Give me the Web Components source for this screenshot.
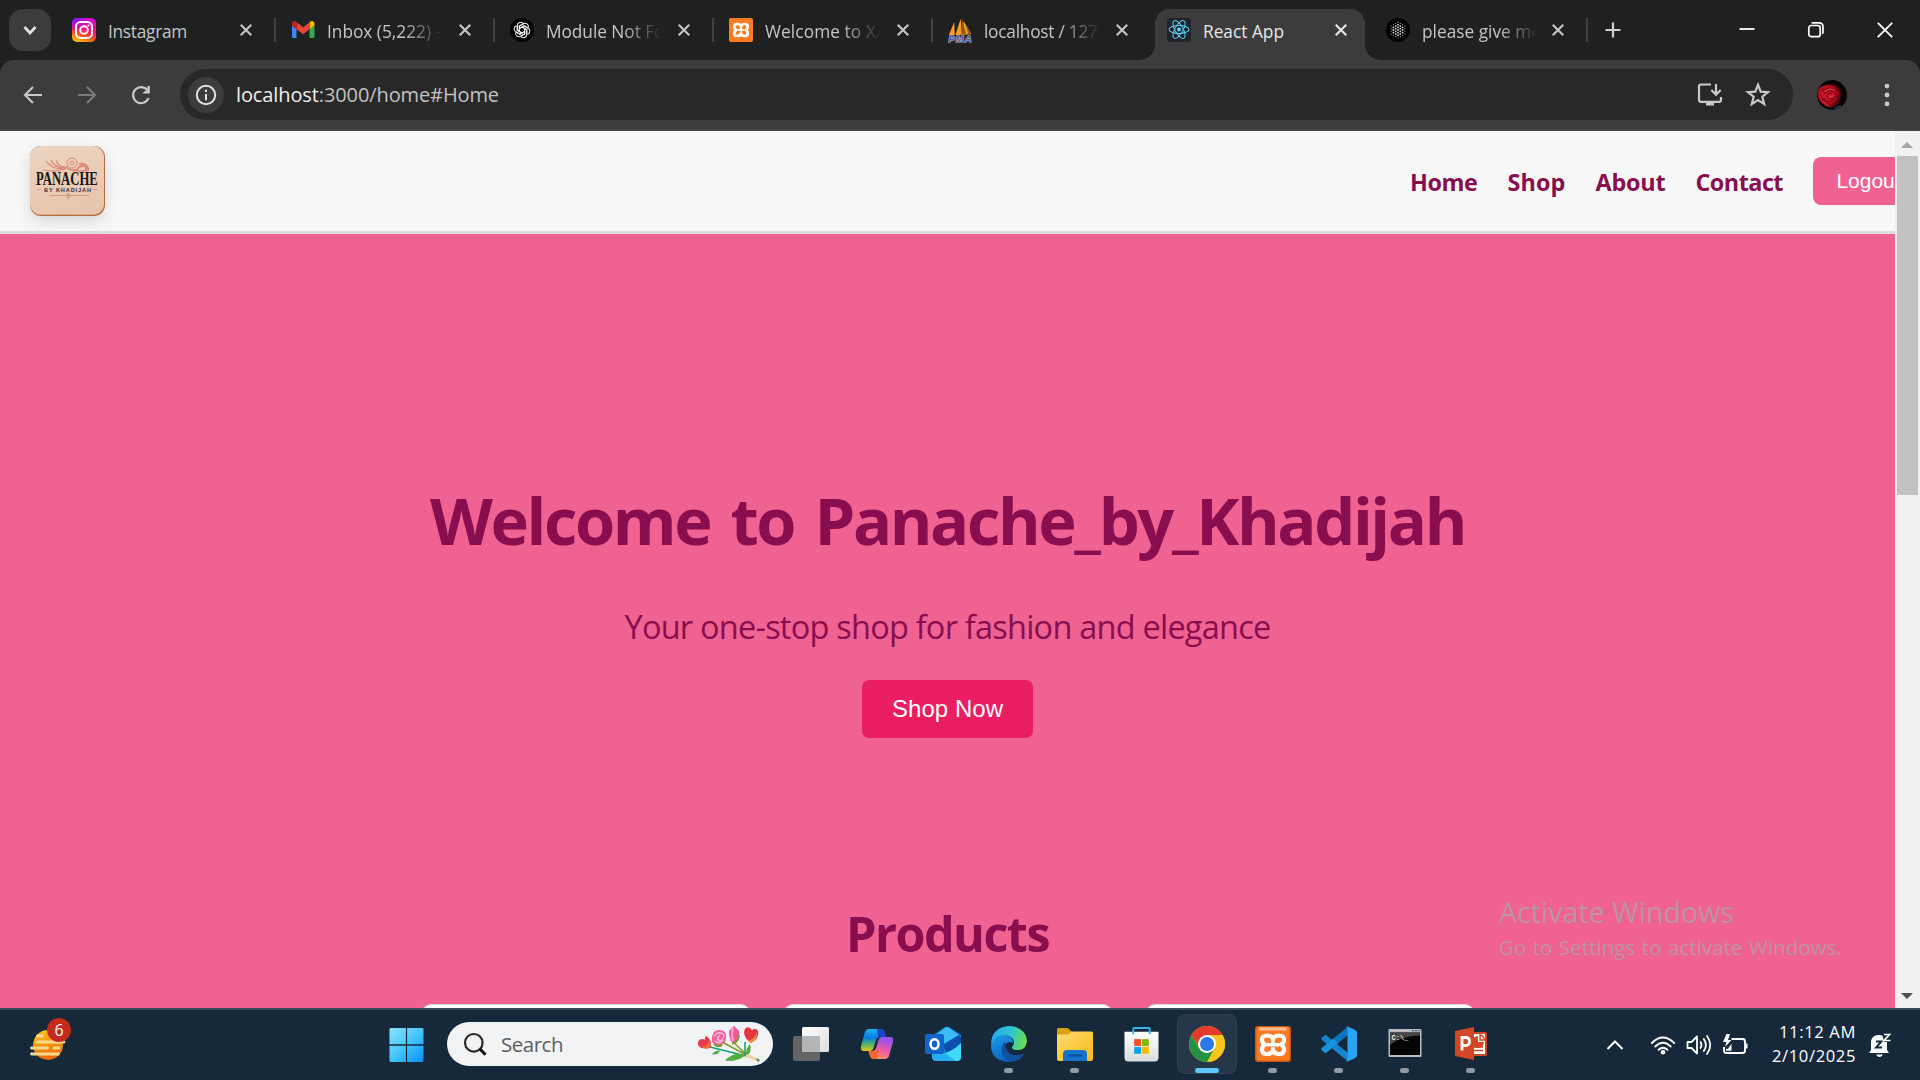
<!DOCTYPE html>
<html lang="en"><head><meta charset="utf-8"><title>React App</title>
<style>
html,body{margin:0;padding:0}
body{width:1920px;height:1080px;overflow:hidden;font-family:"Open Sans","Noto Sans",sans-serif}
</style></head><body>
<desk-screen></desk-screen>
<script>
const ICONS = {
down:['0 0 24 24','<path d="M6.500 9l5.500 6 5.500-6" fill="none" stroke="#e3e3e3" stroke-width="2.600"/>'],
close:['0 0 24 24','<path d="M5 5l14 14M19 5L5 19" stroke="currentColor" stroke-width="2.900"/>'],
instagram:['0 0 24 24','<defs><linearGradient id="a" x1=".2" y1="1" x2=".6" y2="0"><stop offset="0" stop-color="#ffc800"/><stop offset=".3" stop-color="#ff5a1c"/><stop offset=".6" stop-color="#ff0f7b"/><stop offset="1" stop-color="#d30bd0"/></linearGradient><radialGradient id="b" cx=".1" cy="0" r=".7"><stop offset="0" stop-color="#6a1bff"/><stop offset="1" stop-color="#c500e8" stop-opacity="0"/></radialGradient></defs><rect width="24" height="24" rx="5" fill="url(#a)"/><rect width="24" height="24" rx="5" fill="url(#b)"/><g fill="none" stroke="#fff" stroke-width="1.900"><rect x="4" y="4" width="16" height="16" rx="4.500"/><circle cx="12" cy="12" r="3.800"/></g><circle cx="16.500" cy="7.500" r="1.100" fill="#fff"/>'],
gmail:['0 0 24 24','<path fill="#4285f4" d="M1 20h4.500v-9L1 7.600V18.500q0 1.500 1.500 1.500z"/><path fill="#34a853" d="M18.500 20h3.500q1.500 0 1.500-1.500V7.600l-5 3.400z"/><path fill="#fbbc04" d="M18.500 5v6.200l5-3.800V5.700c0-2.200-2.500-3.400-4.200-2.100z"/><path fill="#ea4335" d="M5.500 11.200V4.300l6.700 5 6.300-5v6.900l-6.300 5z"/><path fill="#c5221f" d="M1 5.700v1.900l4.500 3.600V4.300l-.7-.6C3.200 2.300 1 3.500 1 5.700z"/>'],
chatgpt:['0 0 24 24','<circle cx="12" cy="12" r="12" fill="#000"/><g fill="none" stroke="#eee" stroke-width="1.100">'+[0,60,120,180,240,300].map(r=>`<path transform="rotate(${r} 12 12)" d="M9.300 13.500V8.100l4.300-2.500c2.700-1.300 5.500 1.200 4.700 3.900M12 9l4.700 2.700v4.300"/>`).join('')+'</g>'],
xampp:['0 0 24 24','<rect width="24" height="24" rx="2" fill="#fb7a24"/><path d="M12 8.500q-.6-2.500-3.800-2.500-3 0-3 2.800 0 2 2 3.200-2 1.200-2 3.200 0 2.800 3 2.800 3.200 0 3.800-2.500.6 2.500 3.800 2.500 3 0 3-2.800 0-2-2-3.200 2-1.200 2-3.200 0-2.800-3-2.800-3.200 0-3.800 2.500z" fill="none" stroke="#fff" stroke-width="2.700" stroke-linejoin="round"/><path d="M8.500 12h7M12 8v3.500M12 15.500v-2" stroke="#fff" stroke-width="2.200"/>'],
pma:['0 0 24 24','<path d="M.8 17L6.300 4l.4 13zM7.500 17L12.700.5 14 17zM14.500 17l1-14 7.800 13z" fill="#f89c1c"/><path d="M14 .5l4 15-4.500 2zM18 7l5.300 9.500h-3z" fill="#8d5c1e"/><text x="12" y="23.500" text-anchor="middle" font-family="Liberation Sans" font-weight="700" font-style="italic" font-size="9.500" textLength="23" fill="#55568f" stroke="#c5c6ee" stroke-width="1" paint-order="stroke">PMA</text>'],
react:['0 0 24 24','<rect width="24" height="24" rx="3" fill="#20232a"/><g fill="none" stroke="#5bcdec" stroke-width="1.050"><ellipse cx="12" cy="11.500" rx="10" ry="4"/><ellipse cx="12" cy="11.500" rx="10" ry="4" transform="rotate(60 12 11.500)"/><ellipse cx="12" cy="11.500" rx="10" ry="4" transform="rotate(120 12 11.500)"/></g><circle cx="12" cy="11.500" r="2" fill="#5bdafb"/>'],
dots:['0 0 24 24','<circle cx="12" cy="12" r="12" fill="#000"/><g fill="#d5d5d5">'+(()=>{let s='';for(let i=-3;i<=3;i++){const n=7-Math.abs(i);for(let j=0;j<n;j++){const y=12+(j-(n-1)/2)*2.6,x=12+i*2.3,e=(Math.abs(i)==3||j==0||j==n-1);s+=`<circle cx="${x}" cy="${y}" r="${e?.5:.9}"/>`}}return s})()+'</g>'],
plus:['0 0 24 24','<path d="M12 4.500v15M4.500 12h15" stroke="#d0d0d0" stroke-width="2.200"/>'],
min:['0 0 24 24','<path d="M4.500 11h15" stroke="#fff" stroke-width="1.800"/>'],
restore:['0 0 24 24','<g fill="none" stroke="#fff" stroke-width="1.700"><rect x="4.800" y="7.500" width="11.400" height="11.200" rx="2.500"/><path d="M7.500 5.200Q8 4.800 9.500 4.800h5.500q4 0 4 4v5q0 1.500-.8 2"/></g>'],
wclose:['0 0 24 24','<path d="M4.800 4.800l14.400 14.400M19.200 4.800L4.800 19.200" stroke="#fff" stroke-width="1.800"/>'],
back:['0 0 24 24','<path d="M21 12H4.500M12 4l-8 8 8 8" fill="none" stroke="currentColor" stroke-width="2.100"/>'],
reload:['0 0 24 24','<path d="M19.500 15.200a8 8 0 1 1-.8-7.600" fill="none" stroke="#c9c9c9" stroke-width="2.200"/><path d="M20.800 3v7.500h-7.500l2.600-2.500h2.500V3z" fill="#c9c9c9"/>'],
info:['0 0 24 24','<circle cx="12" cy="12" r="9.200" fill="none" stroke="#e3e3e3" stroke-width="2"/><path d="M12 11v6.200M12 6.800v2.200" stroke="#e3e3e3" stroke-width="2"/>'],
install:['0 0 26 26','<path d="M14 2.500H4Q2 2.500 2 4.500v13.300q0 2 2 2h18q2 0 2-2V15" fill="none" stroke="#c9c9c9" stroke-width="2.200"/><path d="M9 20h8v3.500H9z" fill="#c9c9c9"/><path d="M19 2v10M14.300 8l4.700 4.600L23.700 8" fill="none" stroke="#c9c9c9" stroke-width="2.200"/>'],
star:['0 0 24 24','<path d="M12 3.200l2.300 5.900 6.300.4-4.900 4 1.600 6.300L12 16.400l-5.300 3.400 1.600-6.300-4.900-4 6.300-.4z" fill="none" stroke="#c9c9c9" stroke-width="1.900"/>'],
avatar:['0 0 30 30','<defs><radialGradient id="r" cx=".42" cy=".45" r=".55"><stop offset="0" stop-color="#e01c2e"/><stop offset=".7" stop-color="#b20c1b"/><stop offset="1" stop-color="#4a040b"/></radialGradient><clipPath id="c"><circle cx="15" cy="15" r="15"/></clipPath></defs><g clip-path="url(#c)"><rect width="30" height="30" fill="#080407"/><path d="M2 8Q8 3 18 5q7 3 6 11-1 9-9 12-8-1-13-8-3-6 0-12z" fill="url(#r)"/><g fill="none" stroke="#5c040d" stroke-width=".9"><path d="M5 11q8-6 16 0M7 14q7-6 12 0-1 5-6 5-4-1-3-4 2-3 5-1"/><path d="M4 15q2 8 9 10M23 14q-1 7-8 10M7 18q3 5 8 3 5-1 6-6"/></g><path d="M8 12q5-5 10-2M12 17q3 1 5-2M6 21q3 4 6 5" stroke="#ff5a63" stroke-width=".7" fill="none"/><path d="M17 29q2-4 7-4v5z" fill="#17314f"/></g>'],
menu:['0 0 24 24','<g fill="#c9c9c9"><circle cx="12" cy="3.800" r="2.200"/><circle cx="12" cy="12" r="2.200"/><circle cx="12" cy="20.200" r="2.200"/></g>'],
logo:['0 0 75 70','<defs><linearGradient id="l" x1="0" y1="0" x2=".3" y2="1"><stop offset="0" stop-color="#edd5c1"/><stop offset="1" stop-color="#e8c5ae"/></linearGradient></defs><rect width="75" height="70" rx="11" fill="#b9683c"/><rect width="74" height="68.700" rx="11" fill="url(#l)"/><g fill="none" stroke="#dc8877"><path d="M13 24q20 3 25-4M16 15q6 9 20 8M21 14q3 8 14 8M26 14q2 7 10 7" stroke-width="1.200"/><circle cx="42" cy="17" r="5"/><circle cx="42" cy="17" r="2"/><path d="M37 22q8 5 12-1 5-5 10 2M44 24q7 2 15 0M49 18q8-2 9 5M50 21q7-3 6 3" stroke-width="1.500"/></g><text transform="translate(6 39) scale(.705 1)" font-family="Liberation Serif" font-weight="700" font-size="18" fill="#151515">PANACHE</text><text x="14" y="46" font-family="Liberation Sans" font-weight="700" font-size="5.600" textLength="47" fill="#33303c">BY KHADIJAH</text><path d="M7 43.500h4M63 43.500h4M20 49.500h39M38.500 47v6M36.500 49.500l2-2 2 2-2 3z" stroke="#cf8f70" stroke-width=".8" fill="none"/>'],
widget:['0 0 38 42','<defs><linearGradient id="s" x1="0" y1="0" x2=".2" y2="1"><stop offset="0" stop-color="#ffc817"/><stop offset="1" stop-color="#ec6a0a"/></linearGradient></defs><circle cx="19" cy="25" r="15" fill="url(#s)"/><g stroke="#f6d98e" stroke-width="2.800" stroke-linecap="round"><path d="M8.500 16h5M8 22h27M2.500 28h16M25 28h5M2.500 34h27"/></g>'],
start:['0 0 36 36','<defs><linearGradient id="w" x1="0" y1="0" x2="1" y2="1"><stop offset="0" stop-color="#8be2ff"/><stop offset=".5" stop-color="#46c5fb"/><stop offset="1" stop-color="#0891f8"/></linearGradient></defs><path d="M2 .5h15.400v16.700H.5V2Q.500.5 2 .5zM18.600.5H34q1.500 0 1.500 1.500v15.200H18.600zM.5 18.700h16.900v16.800H2q-1.500 0-1.500-1.500zM18.600 18.700h16.900V34q0 1.500-1.500 1.500H18.600z" fill="url(#w)"/>'],
search:['0 0 24 24','<circle cx="10.800" cy="10.800" r="8.800" fill="none" stroke="#2a2a2a" stroke-width="2.200"/><path d="M16.800 16.800l5.700 6" stroke="#111" stroke-width="3"/>'],
flowers:['0 0 64 36','<g fill="none" stroke-width="1.500"><path d="M13 21q20 5 36 9" stroke="#12a06c"/><path d="M27 17l24 13M36 16l14 13" stroke="#7f9d24"/><path d="M48 16v13" stroke="#12a06c"/></g><path d="M28 34.500q10-10 20-5-8 7-20 5zM49 28q0-6 4-10 2 7-2 11zM15 28q5-5 8-3-3 5-8 3z" fill="#4fae3c"/><path d="M50 28l12 5-2 2-12-4z" fill="#ecd2a3"/><path d="M59 32l4 2-2 2z" fill="#2f7a50"/><path d="M9 10q4 2 5 7 .5 3-1 5Q3 24 .9 18.500q-.5-5 4-5.500 1.500 0 2.800 1Q7.700 11 9 10z" fill="#e93c50"/><path d="M4 21q6-1 9-7 2 5-.5 8-5 1-8.500-1z" fill="#f06a3c"/><path d="M54 17q-7-5-7-11Q48 .5 52 1.500q2 .5 3 3Q58 1 61 5q2 7-7 12z" fill="#e6363f"/><path d="M52 14.500q6-2 8-8 1 7-6 10.500z" fill="#f28a3c"/><path d="M15 15q-1-10 6-11 9-1 8 8-1 8-8 8-4 0-6-5z" fill="#f0629d"/><path d="M17 10q5-6 10-1-1 7-6 5-1-4 2-4M18 15q4 4 8-1" fill="none" stroke="#fbc1d8" stroke-width="1.400"/><path d="M32 5l3-3 2-2 3 3 2 2q1 10-4 13-6-1-6-13z" fill="#f0589b"/><path d="M36 2q-2 6 0 13" stroke="#fda9cc" stroke-width="2" fill="none"/><path d="M17 18q4 4 8 1M35 18q7-2 7-9" stroke="#6fa32e" stroke-width="1.800" fill="none"/>'],
taskview:['0 0 38 36','<defs><linearGradient id="t" x1="0" y1="0" x2="1" y2="1"><stop offset="0" stop-color="#fff"/><stop offset="1" stop-color="#ddd"/></linearGradient></defs><rect x="1" y="10" width="27" height="25" rx="2" fill="#636466"/><rect x="10" y="1" width="27" height="25" rx="1.500" fill="url(#t)"/><path d="M10 10h18v16H11.500q-1.500 0-1.500-1.500z" fill="#b4b5b7"/>'],
copilot:['0 0 36 34','<defs><linearGradient id="p" x1="0" y1="0" x2="0" y2="1"><stop offset="0" stop-color="#1ab5ef"/><stop offset=".4" stop-color="#0a7be0"/><stop offset=".7" stop-color="#4fb765"/><stop offset="1" stop-color="#f1c513"/></linearGradient><linearGradient id="q" x1=".3" y1="0" x2="0" y2="1"><stop offset="0" stop-color="#9a53ea"/><stop offset=".5" stop-color="#f05ba1"/><stop offset="1" stop-color="#ffa54c"/></linearGradient></defs><path d="M10 2h11q3 0 4 3l1.500 5H21q-3 0-4 3l-2.500 8q-1 3-4 3H5q-4 0-3-5L6 5q1-3 4-3z" fill="url(#p)"/><path d="M18 2h4q3 0 4 3l1.500 5.500H19z" fill="#1c45ce"/><path d="M26 32H15q-3 0-4-3L9.500 24H13q3 0 4-3l2.500-8q1-3 4-3H31q4 0 3 5l-4 14q-1 3-4 3z" fill="url(#q)"/><path d="M18 32h-3q-3 0-4-3L9.500 24H17q2 0 3-3z" fill="#ef6634"/>'],
outlook:['0 0 38 38','<path d="M8 11L21 2q2-1 4 0l12 8v22q0 4-4 4H13q-5 0-5-5z" fill="#1686dc"/><path d="M13 9l8-6q2-1.500 4 0l10 7-16 9z" fill="#39bdf4"/><path d="M19 20l16-10 2 3v7L22 28z" fill="#0b50ae"/><path d="M9 28q14 4 28-10v14q0 4-4 4H13q-5 0-5-5z" fill="#40dafa"/><path d="M8 29l10-3 14 10H13q-5 0-5-5z" fill="#23aff0"/><rect x="1" y="9" width="19" height="20" rx="2" fill="#1264cc"/><ellipse cx="10.500" cy="19" rx="4" ry="4.700" fill="none" stroke="#fff" stroke-width="2.600"/>'],
edge:['0 0 36 36','<defs><linearGradient id="e1" x1="0" y1=".4" x2="1" y2=".6"><stop offset="0" stop-color="#2aa9ec"/><stop offset=".5" stop-color="#2dc5cf"/><stop offset="1" stop-color="#6de048"/></linearGradient><linearGradient id="e2" x1="0" y1="0" x2=".5" y2="1"><stop offset="0" stop-color="#1d9de9"/><stop offset="1" stop-color="#0a61ba"/></linearGradient></defs><path d="M0 18Q1 1 18 0q17 1 18 15-1 10-11 9-4 0-4-3 4-5 0-9Q14 5 0 18z" fill="url(#e1)"/><path d="M0 19Q4 8 14 9q8 1 8 8-5-3-8 2-2 8 7 12 6 2 12-3-5 8-15 8Q0 35 0 19z" fill="url(#e2)"/><path d="M14 15q-5 6-3 12 3 9 10 8.500 8-1 12-8-6 3-12 1-7-3-7-13.500z" fill="#124f9e"/>'],
folder:['0 0 36 36','<defs><linearGradient id="f" x1="0" y1="0" x2="1" y2="1"><stop offset="0" stop-color="#ffdc74"/><stop offset="1" stop-color="#f8b912"/></linearGradient></defs><path d="M0 3.500Q0 2 1.500 2h8q1.500 0 2.500 1l3 3v5H0z" fill="#dea10d"/><path d="M0 8.500h10q1.500 0 2.500-1l2-2H34.500q1.500 0 1.500 1.500V33q0 2-2 2H2q-2 0-2-2z" fill="url(#f)"/><path d="M6 35v-7q0-4 4-4h16q4 0 4 4v7z" fill="#1673cb"/><path d="M11 29.500h14" stroke="#0a4f99" stroke-width="2"/>'],
store:['0 0 36 36','<defs><linearGradient id="o" x1="0" y1="0" x2="0" y2="1"><stop offset="0" stop-color="#fff"/><stop offset="1" stop-color="#dcdcdc"/></linearGradient></defs><path d="M.5 5.500h35V32q0 4-4 4h-27q-4 0-4-4z" fill="url(#o)"/><path d="M9.500 8V3q0-1.500 1.500-1.500h14q1.500 0 1.500 1.500v5" fill="none" stroke="#35b5ec" stroke-width="2"/><path d="M10.500 13h7v7h-7z" fill="#f25022"/><path d="M18.500 13h7v7h-7z" fill="#7fba00"/><path d="M10.500 21h7v7h-7z" fill="#00a4ef"/><path d="M18.500 21h7v7h-7z" fill="#ffb900"/>'],
chrome:['0 0 36 36','<circle cx="18" cy="18" r="18" fill="#fbc116"/><path d="M18 9h15.600A18 18 0 0 0 2.400 9l8 13z" fill="#e33b2e"/><path d="M2.400 9A18 18 0 0 0 18 36l7.800-13.500H18L10.200 22.500z" fill="#229342"/><path d="M25.800 22.500L18 36a18 18 0 0 0 15.600-27H18z" fill="#fcc31d"/><circle cx="18" cy="18" r="9" fill="#fff"/><circle cx="18" cy="18" r="7" fill="#2a78ea"/>'],
xamppbig:['0 0 36 36','<rect width="36" height="36" rx="3" fill="#c95c14"/><rect x="1.500" y="1" width="33" height="33.500" rx="2.500" fill="#fb7a24"/><rect x="4" y="1.500" width="28" height="3" rx="1.500" fill="#ffbf92"/><path d="M18 13.500q-1-4-6-4-5 0-5 4.500 0 3 3 4.700-3 1.800-3 4.700 0 4.600 5 4.600 5 0 6-4 1 4 6 4 5 0 5-4.600 0-2.900-3-4.700 3-1.700 3-4.700 0-4.500-5-4.500-5 0-6 4z" fill="none" stroke="#fff" stroke-width="4.200" stroke-linejoin="round"/><path d="M12 18.700h12M18 13v5M18 24v-3" stroke="#fff" stroke-width="3.400"/>'],
vscode:['0 0 36 36','<path d="M1 11.500l2.500-2q1-.8 2 0L27 27v8.500L.9 14q-1.200-1.200.1-2.500z" fill="#1583cd"/><path d="M1 24.500l2.500 2q1 .8 2 0L27 9V.5L.9 22q-1.200 1.200.1 2.500z" fill="#0b74bd"/><path d="M1 24.500l2.500 2q1 .8 2 0L17 17l-5-4L.9 22q-1.200 1.200.1 2.500z" fill="#1593dc"/><path d="M25 0l9 3.700q2 1 2 3v22.600q0 2-2 3L25 36q1.500-1 1.500-3V3q0-2-1.500-3z" fill="#2aa5f3"/>'],
terminal:['0 0 34 30','<rect x=".5" y="1" width="33" height="28" rx="1" fill="#b9bdbf"/><rect x="2" y="4.500" width="30" height="22.500" fill="#050505"/><path d="M2 4.500h30v3Q12 8 2 17z" fill="#454545"/><text x="3.500" y="11.500" font-family="Liberation Mono" font-weight="700" font-size="7" fill="#eee">C:\\_</text><path d="M24 2.700h8" stroke="#345" stroke-dasharray="2 1"/>'],
ppt:['0 0 32 34','<rect x="14" y="5" width="18" height="24" rx="1.500" fill="#d24726"/><path d="M16 7h14v20H16z" fill="#fff"/><path d="M23 9v6h6a6 6 0 1 1-6-6z" fill="#d24726"/><path d="M25 8q4 .5 4.500 5H25zM17 20h11M17 23.500h11" stroke="#d24726" stroke-width="1.500" fill="#fff"/><path d="M0 4l19-4v33L0 29z" fill="#d24726"/><path d="M7 23.500V10.500h3.500q4 0 4 4t-4 4H7" fill="none" stroke="#fff" stroke-width="2.800"/>'],
chev:['0 0 18 12','<path d="M1.500 10L9 2.500l7.500 7.500" fill="none" stroke="#fff" stroke-width="2"/>'],
wifi:['0 0 26 20','<g fill="none" stroke="#fff" stroke-width="1.900" stroke-linecap="round"><path d="M1.800 8q11.200-11 22.400 0M5.300 11.500q7.700-7.600 15.400 0M8.600 14.800q4.400-4.300 8.800 0"/></g><circle cx="13" cy="17.200" r="2.300" fill="#fff"/>'],
speaker:['0 0 26 22','<g fill="none" stroke="#fff" stroke-width="1.800" stroke-linejoin="round" stroke-linecap="round"><path d="M1.500 8h4l5.500-5.500v17L5.500 14h-4zM14.500 8q2 3 0 6M17.800 5q4.200 6 0 12M21 2q6.500 9 0 18"/></g>'],
battery:['0 0 26 22','<path d="M9.500 5h11q2.500 0 2.500 2.500v9q0 2.500-2.500 2.500H4.500Q2 19 2 16.500V13" fill="none" stroke="#fff" stroke-width="1.900"/><path d="M23 9.500h2.500v5H23z" fill="#fff"/><path d="M4 16.800v-2l2 0 3.500-5v7z" fill="#fff"/><path d="M4.500 0L1 8h3.500L3 13l6.500-7H6l2-6z" fill="#fff"/>'],
bell:['0 0 24 26','<path d="M3 18v-7Q3 3 11 3q8 0 8 8v7l2 3H1z" fill="#fff"/><path d="M8 22.500h7q-3.500 5-7 0z" fill="#fff"/><path d="M8 9.500h5.500L8 15.500h6" fill="none" stroke="#15293a" stroke-width="1.900"/><path d="M14 1h9v9h-7z" fill="#15293a"/><path d="M16 2.500h5.500L16 8.500h6.500" fill="none" stroke="#fff" stroke-width="1.700"/>']
};
function define(name, html, up){
  const t=document.createElement('template'); t.innerHTML=html;
  customElements.define(name, class extends HTMLElement{
    constructor(){super();this.attachShadow({mode:'open'}).append(t.content.cloneNode(true));}
    connectedCallback(){ if(up) up.call(this,this.shadowRoot); }
  });
}
/* Inline icon: name, w, h */
define('ui-icon','<style>:host{display:block;flex:none;line-height:0}svg{display:block;overflow:visible}</style>',function(r){
  const [vb,body]=ICONS[this.getAttribute('name')];
  const w=this.getAttribute('w')||24,h=this.getAttribute('h')||w;
  r.querySelector('svg')?.remove();
  r.append(document.createRange().createContextualFragment(`<svg width="${w}" height="${h}" viewBox="${vb}">${body}</svg>`));
});
/* One line of text, tracked to a given width */
define('fit-text','<style>:host{display:inline-block;white-space:pre;flex:none}</style><slot></slot>',function(){
  const w=+this.getAttribute('w'), n=this.textContent.length;
  this.style.letterSpacing='0px';
  const now=this.getBoundingClientRect().width;
  if(now) this.style.letterSpacing=((w-now)/n).toFixed(3)+'px';
});
define('browser-tab',`<style>
:host{display:flex;align-items:center;box-sizing:border-box;width:219px;height:51px;padding:0 0 9px 12px;color:#c3c6c4;font-size:17.3px;line-height:26px;border-radius:0}
.t{width:113px;margin:4px 0 0 12px;overflow:hidden;white-space:nowrap;mask-image:linear-gradient(90deg,#000 76px,transparent 116px)}
:host([full]) .t{mask-image:none}
.x{margin-left:16px}
.sep{width:2px;height:24px;margin-left:19px;background:#3f4140}
:host([active]){width:210px;background:#3c3c3c;border-radius:15px 15px 0 0;margin-right:9px;color:#e6e6e6;position:relative}
:host([active])::before,:host([active])::after{content:"";position:absolute;bottom:0;width:15px;height:15px}
:host([active])::before{left:-15px;background:radial-gradient(circle at 0 0,transparent 14.5px,#3c3c3c 15px)}
:host([active])::after{right:-15px;background:radial-gradient(circle at 100% 0,transparent 14.5px,#3c3c3c 15px)}
:host([active]) .sep,:host([nosep]) .sep{display:none}
:host([last]){width:214px}:host([last]) .x{margin-left:15px}
</style><slot name="icon"></slot><div class="t"><slot></slot></div><ui-icon class="x" name="close" w="18"></ui-icon><div class="sep"></div>`);
define('tab-strip',`<style>:host{display:flex;height:60px;box-sizing:border-box;padding:9px 0 0 9px;background:#1f2120}
.d{width:42px;height:42px;border-radius:14px;background:#3c3c3c;display:grid;place-items:center;margin-right:9px}
.p{margin:9px 0 0 13px}.w{display:flex;gap:45px;margin:9px 23px 0 auto}</style>
<div class="d"><ui-icon name="down"></ui-icon></div>
<browser-tab full><ui-icon slot="icon" name="instagram"></ui-icon><fit-text w="79">Instagram</fit-text></browser-tab>
<browser-tab><ui-icon slot="icon" name="gmail"></ui-icon><fit-text w="114">Inbox (5,222) -</fit-text></browser-tab>
<browser-tab><ui-icon slot="icon" name="chatgpt"></ui-icon><fit-text w="129">Module Not Fou</fit-text></browser-tab>
<browser-tab><ui-icon slot="icon" name="xampp"></ui-icon><fit-text w="122">Welcome to XA</fit-text></browser-tab>
<browser-tab nosep><ui-icon slot="icon" name="pma"></ui-icon><fit-text w="118">localhost / 127.</fit-text></browser-tab>
<browser-tab active full><ui-icon slot="icon" name="react"></ui-icon><fit-text w="81">React App</fit-text></browser-tab>
<browser-tab last><ui-icon slot="icon" name="dots"></ui-icon><fit-text w="119">please give me</fit-text></browser-tab>
<ui-icon class="p" name="plus"></ui-icon>
<div class="w"><ui-icon name="min"></ui-icon><ui-icon name="restore"></ui-icon><ui-icon name="wclose"></ui-icon></div>`);
define('address-bar',`<style>:host{display:block;height:71px;background:#1f2120}
.b{display:flex;align-items:center;height:71px;box-sizing:border-box;padding:0 20px 2px 21px;background:#3c3c3c;border-radius:14px 14px 0 0;box-shadow:inset 0 -2px #454545}
.o{display:flex;align-items:center;box-sizing:border-box;width:1614px;height:51px;border-radius:26px;background:#282828;margin-left:27px;padding:0 23px 0 8px}
.i{width:36px;height:36px;border-radius:50%;background:#3c3c3c;display:grid;place-items:center;margin-right:12px}
.u{font-size:20px;line-height:28px;color:#c2c2c2}.u b{font-weight:400;color:#efefef}
.s{margin-left:auto}.g{margin-left:30px}</style>
<div class="b"><ui-icon name="back" w="24" style="color:#c9c9c9"></ui-icon><ui-icon class="g" name="back" style="color:#7c7c7c;transform:scaleX(-1)"></ui-icon><ui-icon class="g" name="reload"></ui-icon>
<div class="o"><div class="i"><ui-icon name="info"></ui-icon></div><fit-text class="u" w="263"><b>localhost</b>:3000/home#Home</fit-text><ui-icon class="s" name="install" w="26"></ui-icon><ui-icon name="star" w="28" style="margin-left:21px;margin-right:-2px"></ui-icon></div>
<ui-icon name="avatar" w="30" style="margin-left:24px"></ui-icon><ui-icon name="menu" w="26" style="margin-left:27px"></ui-icon></div>`);
define('site-header',`<style>:host{display:flex;align-items:center;box-sizing:border-box;width:1958px;height:103px;padding:0 30px;background:#f8f8f8;border-bottom:3px solid #ddd}
.l{border-radius:12px;box-shadow:0 5px 15px rgba(0,0,0,.14)}
nav{display:flex;align-items:center;gap:30px;margin-left:auto;font-size:23.4px;line-height:32px;font-weight:700;color:#880e4f}
nav fit-text{margin-top:1px}
button{width:115px;height:48px;border:0;border-radius:8px;background:#f06292;color:#fff;font:21px/28px "Liberation Sans",Arial,sans-serif;padding:0 4px 1px 0}</style>
<ui-icon class="l" name="logo" w="75" h="70"></ui-icon><nav><fit-text w="67.500">Home</fit-text><fit-text w="58">Shop</fit-text><fit-text w="70">About</fit-text><fit-text w="87.500">Contact</fit-text><button>Logout</button></nav>`);
define('hero-banner',`<style>:host{display:flex;flex-direction:column;align-items:center;padding-top:241px;color:#880e4f;text-align:center}
h1{margin:0;font-size:65px;line-height:90px;word-spacing:.09em}p{margin:40px 0 31px;font-size:32.5px;line-height:44px}p fit-text,h1 fit-text{display:block}
button{width:171px;height:58px;border:0;border-radius:7px;background:#e91e63;color:#fff;font:24px/28px "Liberation Sans",Arial,sans-serif;padding:0 0 1px}</style>
<h1><fit-text w="1035">Welcome to Panache_by_Khadijah</fit-text></h1><p><fit-text w="646">Your one-stop shop for fashion and elegance</fit-text></p><button><fit-text w="111">Shop Now</fit-text></button>`);
define('product-card','<style>:host{display:block;width:332px;height:400px;box-sizing:border-box;background:#fff;border:1px solid #ddd;border-radius:12px}</style>');
define('product-list',`<style>:host{display:flex;flex-direction:column;align-items:center;padding-top:162px;color:#880e4f}
h2{margin:0 0 38px;font-size:48.5px;line-height:66px}div{display:flex;gap:30px}</style>
<h2><fit-text w="203">Products</fit-text></h2><div><product-card></product-card><product-card></product-card><product-card></product-card></div>`);
define('scroll-bar',`<style>:host{display:flex;flex-direction:column;align-items:center;width:25px;height:877px;background:#f1f1f1;flex:none;box-sizing:border-box;padding:11px 1px 9px 0}
i{border:6px solid transparent}.u{border-top:0;border-bottom-color:#a3a3a3;margin-bottom:8px}.t{width:21px;height:339px;background:#c1c1c1}.d{border-bottom:0;border-top-color:#505050;margin-top:auto}</style><i class="u"></i><div class="t"></div><i class="d"></i>`);
define('web-view',`<style>:host{display:flex;height:877px;overflow:hidden}main{width:1895px;height:877px;overflow:hidden;background:#f06292}</style>
<main><site-header></site-header><hero-banner></hero-banner><product-list></product-list></main><scroll-bar></scroll-bar>`);
define('task-item',`<style>:host{display:flex;width:66px;height:72px;align-items:center;justify-content:center;position:relative}
.h{width:60px;height:60px;display:grid;place-items:center;box-sizing:border-box;border-radius:8px;margin-top:-2px}
:host([active]) .h{background:#253748;border:1px solid #304252}
.m{display:none;position:absolute;left:28px;top:59px;width:9px;height:5px;border-radius:3px;background:#929ba3}
:host([run]) .m{display:block}:host([active]) .m{display:block;left:21px;width:24px;background:#5bc8ff}</style><div class="h"><slot></slot></div><div class="m"></div>`);
define('task-bar',`<style>:host{display:flex;align-items:center;height:72px;box-sizing:border-box;background:#15293a;border-top:2px solid #3c4b59;position:relative}
.wd{margin-left:29px;width:42px;height:42px;position:relative;margin-top:-8px}.bd{position:absolute;left:18px;top:-2px;width:24px;height:24px;border-radius:50%;background:#c42b1c;color:#fff;font-size:16px;line-height:25px;text-align:center}
.st{margin:-1px 0 0 318px}
.se{display:flex;align-items:center;box-sizing:border-box;width:326px;height:44px;border-radius:22px;background:#f1f3f5;margin:-2px 5px 0 23px;padding:0 12px 0 16px;color:#5c5e60;font-size:20.5px;line-height:28px}
.se fit-text{margin-left:14px}.se .f{margin-left:auto}
.tr{display:flex;align-items:center;margin-left:102px;margin-top:-1px}.ck{color:#fff;font-size:16.6px;line-height:24px;text-align:right;width:85px;margin-left:23px;margin-top:-2px}.ck fit-text{display:block;margin-left:auto;width:max-content}</style>
<div class="wd"><ui-icon name="widget" w="38" h="42"></ui-icon><div class="bd">6</div></div>
<ui-icon class="st" name="start" w="35" h="36"></ui-icon>
<div class="se"><ui-icon name="search" w="24" h="26"></ui-icon><fit-text w="62">Search</fit-text><ui-icon class="f" name="flowers" w="64" h="36"></ui-icon></div>
<task-item><ui-icon name="taskview" w="38" h="36"></ui-icon></task-item>
<task-item><ui-icon name="copilot" w="36" h="34"></ui-icon></task-item>
<task-item><ui-icon name="outlook" w="38"></ui-icon></task-item>
<task-item run><ui-icon name="edge" w="36"></ui-icon></task-item>
<task-item run><ui-icon name="folder" w="36"></ui-icon></task-item>
<task-item><ui-icon name="store" w="35" h="36"></ui-icon></task-item>
<task-item active><ui-icon name="chrome" w="36"></ui-icon></task-item>
<task-item run><ui-icon name="xamppbig" w="36"></ui-icon></task-item>
<task-item run><ui-icon name="vscode" w="36"></ui-icon></task-item>
<task-item run><ui-icon name="terminal" w="34" h="30" style="margin-bottom:2px"></ui-icon></task-item>
<task-item run><ui-icon name="ppt" w="32" h="34"></ui-icon></task-item>
<div class="tr"><ui-icon name="chev" w="18" h="12"></ui-icon><ui-icon name="wifi" w="26" h="20" style="margin-left:26px"></ui-icon><ui-icon name="speaker" w="26" h="22" style="margin-left:10px"></ui-icon><ui-icon name="battery" w="26" h="22" style="margin-left:10px"></ui-icon>
<div class="ck"><fit-text w="77">11:12 AM</fit-text><fit-text w="84">2/10/2025</fit-text></div><ui-icon name="bell" w="24" h="26" style="margin-left:12px"></ui-icon></div>`);
define('activation-note',`<style>:host{position:absolute;left:1499px;top:892px;color:#bc93a2;display:flex;flex-direction:column;align-items:flex-start}
.a{font-size:28.5px;line-height:40px}.b{font-size:20.4px;line-height:30px;word-spacing:.05em}</style><fit-text class="a" w="235">Activate Windows</fit-text><fit-text class="b" w="343">Go to Settings to activate Windows.</fit-text>`);
define('desk-screen',`<style>:host{display:flex;flex-direction:column;width:1920px;height:1080px;overflow:hidden;position:relative;background:#15293a}</style>
<tab-strip></tab-strip><address-bar></address-bar><web-view></web-view><task-bar></task-bar><activation-note></activation-note>`);
</script></body></html>
